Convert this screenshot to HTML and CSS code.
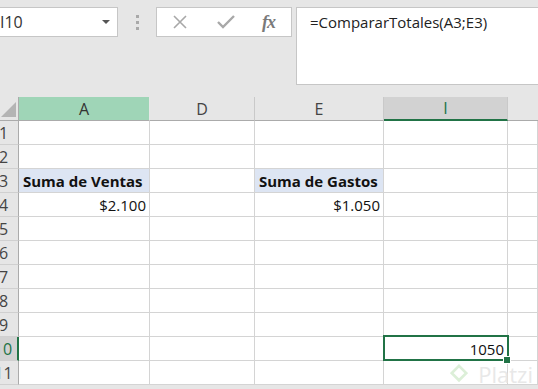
FILE: index.html
```html
<!DOCTYPE html>
<html>

<head>
    <meta charset="UTF-8">
    <title>Excel - CompararTotales</title>
    <link rel="stylesheet" href="styles.css">
</head>

<body>
    <!-- Barra de fórmulas -->
    <div class="toolbar">
        <div class="name-box">
            <span>I10</span>
            <span class="caret"></span>
        </div>
        <div class="grip">
            <span></span><span></span><span></span>
        </div>
        <div class="fx-box">
            <svg class="icon" width="16" height="16" viewBox="0 0 16 16">
                <path d="M2 2 L14 14 M14 2 L2 14" stroke="#a8a8a8" stroke-width="1.6" fill="none" />
            </svg>
            <svg class="icon" width="18" height="14" viewBox="0 0 18 14">
                <path d="M1 7 L6 12 L17 1" stroke="#a8a8a8" stroke-width="2.4" fill="none" />
            </svg>
            <span class="fx">fx</span>
        </div>
        <div class="formula">=CompararTotales(A3;E3)</div>
    </div>

    <!-- Hoja -->
    <div class="sheet">
        <div class="corner">
            <svg width="15" height="15" viewBox="0 0 15 15">
                <path d="M15 0 L15 15 L0 15 Z" fill="#b4b4b4" />
            </svg>
        </div>
        <div class="col-head selected">A</div>
        <div class="col-head">D</div>
        <div class="col-head">E</div>
        <div class="col-head active">I</div>
        <div class="col-head last"></div>

        <div class="row-head"><span>1</span></div>
        <div class="cell"></div><div class="cell"></div><div class="cell"></div><div class="cell"></div><div class="cell"></div>

        <div class="row-head"><span>2</span></div>
        <div class="cell"></div><div class="cell"></div><div class="cell"></div><div class="cell"></div><div class="cell"></div>

        <div class="row-head"><span>3</span></div>
        <div class="cell label">Suma de Ventas</div><div class="cell"></div><div class="cell label">Suma de Gastos</div><div class="cell"></div><div class="cell"></div>

        <div class="row-head"><span>4</span></div>
        <div class="cell num">$2.100</div><div class="cell"></div><div class="cell num">$1.050</div><div class="cell"></div><div class="cell"></div>

        <div class="row-head"><span>5</span></div>
        <div class="cell"></div><div class="cell"></div><div class="cell"></div><div class="cell"></div><div class="cell"></div>

        <div class="row-head"><span>6</span></div>
        <div class="cell"></div><div class="cell"></div><div class="cell"></div><div class="cell"></div><div class="cell"></div>

        <div class="row-head"><span>7</span></div>
        <div class="cell"></div><div class="cell"></div><div class="cell"></div><div class="cell"></div><div class="cell"></div>

        <div class="row-head"><span>8</span></div>
        <div class="cell"></div><div class="cell"></div><div class="cell"></div><div class="cell"></div><div class="cell"></div>

        <div class="row-head"><span>9</span></div>
        <div class="cell"></div><div class="cell"></div><div class="cell"></div><div class="cell"></div><div class="cell"></div>

        <div class="row-head active"><span>10</span></div>
        <div class="cell"></div><div class="cell"></div><div class="cell"></div><div class="cell num current">1050</div><div class="cell"></div>

        <div class="row-head"><span>11</span></div>
        <div class="cell"></div><div class="cell"></div><div class="cell"></div><div class="cell"></div><div class="cell"></div>
    </div>

    <!-- marca de agua -->
    <div class="watermark">
        <svg width="18" height="20" viewBox="0 0 20 22">
            <path d="M10 2 L18 10 L10 18 L2 10 Z" stroke="#dcefd8" stroke-width="3" fill="none" />
        </svg>
        <span>Platzi</span>
    </div>
</body>

</html>
```

FILE: styles.css
```css
/* Reset */
* {
    margin: 0;
    padding: 0;
    box-sizing: border-box;
}

body {
    background-color: #e6e6e6;
    font-family: "Open Sans", sans-serif;
    color: #222;
    overflow: hidden;
    position: relative;
    height: 389px;
}

/* Barra superior */
.toolbar {
    display: flex;
    align-items: flex-start;
    height: 97px;
    padding-top: 7px;
}

.name-box {
    width: 118px;
    height: 30px;
    background-color: #fff;
    border: 1px solid #c6c6c6;
    border-left: none;
    display: flex;
    align-items: center;
    justify-content: space-between;
    padding: 0 7px 1px 0;
    font-size: 16px;
    color: #333;
}

.caret {
    width: 0;
    height: 0;
    border-left: 4px solid transparent;
    border-right: 4px solid transparent;
    border-top: 4px solid #555;
}

.grip {
    width: 38px;
    height: 30px;
    display: flex;
    flex-direction: column;
    align-items: center;
    justify-content: center;
    gap: 3px;
}

.grip span {
    width: 3px;
    height: 3px;
    background-color: #a9a9a9;
}

.fx-box {
    width: 136px;
    height: 30px;
    background-color: #fff;
    border: 1px solid #c6c6c6;
    display: flex;
    align-items: center;
    padding-left: 15px;
}

.fx-box .icon:first-child {
    margin-right: 29px;
}

.fx {
    margin-left: 27px;
    font-family: "Liberation Serif", serif;
    font-style: italic;
    font-weight: bold;
    font-size: 18px;
    color: #7a7a7a;
    letter-spacing: -1px;
}

.formula {
    flex: 1;
    margin-left: 4px;
    height: 78px;
    background-color: #fff;
    border: 1px solid #c6c6c6;
    border-right: none;
    padding: 4px 0 0 13px;
    font-size: 15px;
    color: #222;
}

/* Hoja de cálculo */
.sheet {
    display: grid;
    grid-template-columns: 19px 131px 105px 129px 124px 1fr;
    grid-auto-rows: 24px;
    background-color: #fff;
}

.corner {
    background-color: #e6e6e6;
    border-right: 1px solid #ababab;
    border-bottom: 1px solid #ababab;
    display: flex;
    align-items: flex-end;
    justify-content: flex-end;
    padding: 0 2px 3px 0;
}

.col-head {
    background-color: #e6e6e6;
    border-right: 1px solid #c9c9c9;
    border-bottom: 1px solid #ababab;
    display: flex;
    align-items: center;
    justify-content: center;
    font-size: 16px;
    color: #444;
}

.col-head.selected {
    background-color: #9fd5b7;
    border-right-color: #e8e8e8;
    color: #333;
}

.col-head.active {
    background-color: #d2d2d2;
    border-bottom: 2px solid #217346;
    color: #217346;
}

.col-head.last {
    border-right: none;
}

.row-head {
    background-color: #e6e6e6;
    border-right: 1px solid #ababab;
    border-bottom: 1px solid #d0d0d0;
    display: flex;
    align-items: center;
    justify-content: center;
    padding-right: 11px;
    overflow: hidden;
    font-size: 16px;
    color: #444;
}

.row-head span {
    flex-shrink: 0;
}

.row-head.active {
    background-color: #d2d2d2;
    border-right: 2px solid #217346;
    color: #217346;
}

.cell {
    border-right: 1px solid #d4d4d4;
    border-bottom: 1px solid #d4d4d4;
    display: flex;
    align-items: center;
    padding: 0 3px 0 4px;
    font-size: 15px;
    color: #111;
    white-space: nowrap;
}

.cell.label {
    background-color: #dde5f3;
    font-weight: bold;
}

.cell.num {
    justify-content: flex-end;
}

.cell.current {
    position: relative;
}

.cell.current::after {
    content: "";
    position: absolute;
    top: -2px;
    left: -1px;
    right: -2px;
    bottom: -1px;
    border: 2px solid #217346;
}

.cell.current::before {
    content: "";
    position: absolute;
    right: -4px;
    bottom: -4px;
    width: 6px;
    height: 6px;
    background-color: #217346;
    border: 1px solid #fff;
    z-index: 2;
}

/* Marca de agua */
.watermark {
    position: absolute;
    right: 5px;
    bottom: 4px;
    display: flex;
    align-items: center;
    gap: 10px;
    font-size: 22px;
    line-height: 1;
    color: #e8e8e8;
}
```
